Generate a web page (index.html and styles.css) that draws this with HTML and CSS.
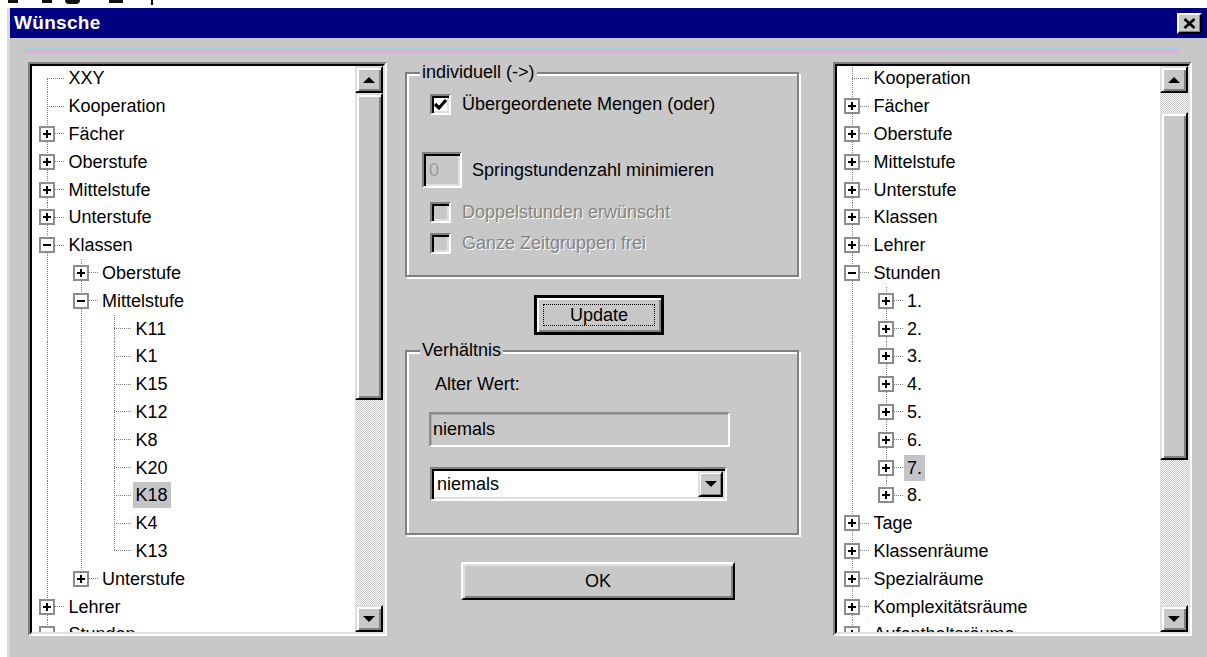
FILE: index.html
```html
<!DOCTYPE html>
<html lang="de">
<head>
<meta charset="utf-8">
<title>Wünsche</title>
<link rel="stylesheet" href="styles.css">
</head>
<body>
<div class="strip">
  <span class="tb tb1"></span><span class="tb tb2"></span><span class="tb tb3"></span><span class="tb tb4"></span><span class="tb tb5"></span>
</div>
<div class="window">
  <div class="titlebar">
    <span class="title">Wünsche</span>
    <button class="close" type="button" aria-label="Schließen">
      <svg width="13" height="11" viewBox="0 0 13 11"><path d="M1.5 1 L11.5 10 M11.5 1 L1.5 10" stroke="#000" stroke-width="2.6" fill="none"/></svg>
    </button>
  </div>
  <div class="client">
    <div class="sep"></div>
    <div class="columns">

      <!-- left tree -->
      <div class="tree">
        <div class="tree-in">
          <div class="list">
            <div class="row"><span class="c first"></span><span class="label">XXY</span></div>
            <div class="row"><span class="c tee"></span><span class="label">Kooperation</span></div>
            <div class="row"><span class="c tee"><span class="box plus"></span></span><span class="label">Fächer</span></div>
            <div class="row"><span class="c tee"><span class="box plus"></span></span><span class="label">Oberstufe</span></div>
            <div class="row"><span class="c tee"><span class="box plus"></span></span><span class="label">Mittelstufe</span></div>
            <div class="row"><span class="c tee"><span class="box plus"></span></span><span class="label">Unterstufe</span></div>
            <div class="row"><span class="c tee"><span class="box minus"></span></span><span class="label">Klassen</span></div>
            <div class="row"><span class="g pipe"></span><span class="c tee"><span class="box plus"></span></span><span class="label">Oberstufe</span></div>
            <div class="row"><span class="g pipe"></span><span class="c tee"><span class="box minus"></span></span><span class="label">Mittelstufe</span></div>
            <div class="row"><span class="g pipe"></span><span class="g pipe"></span><span class="c tee"></span><span class="label">K11</span></div>
            <div class="row"><span class="g pipe"></span><span class="g pipe"></span><span class="c tee"></span><span class="label">K1</span></div>
            <div class="row"><span class="g pipe"></span><span class="g pipe"></span><span class="c tee"></span><span class="label">K15</span></div>
            <div class="row"><span class="g pipe"></span><span class="g pipe"></span><span class="c tee"></span><span class="label">K12</span></div>
            <div class="row"><span class="g pipe"></span><span class="g pipe"></span><span class="c tee"></span><span class="label">K8</span></div>
            <div class="row"><span class="g pipe"></span><span class="g pipe"></span><span class="c tee"></span><span class="label">K20</span></div>
            <div class="row"><span class="g pipe"></span><span class="g pipe"></span><span class="c tee"></span><span class="label sel">K18</span></div>
            <div class="row"><span class="g pipe"></span><span class="g pipe"></span><span class="c tee"></span><span class="label">K4</span></div>
            <div class="row"><span class="g pipe"></span><span class="g pipe"></span><span class="c ell"></span><span class="label">K13</span></div>
            <div class="row"><span class="g pipe"></span><span class="c ell"><span class="box plus"></span></span><span class="label">Unterstufe</span></div>
            <div class="row"><span class="c tee"><span class="box plus"></span></span><span class="label">Lehrer</span></div>
            <div class="row"><span class="c tee"><span class="box minus"></span></span><span class="label">Stunden</span></div>
          </div>
          <div class="scroll">
            <div class="sb-btn"><span class="arr-up"></span></div>
            <div class="thumb thumb-left"></div>
            <div class="track"></div>
            <div class="sb-btn"><span class="arr-down"></span></div>
          </div>
        </div>
      </div>

      <!-- middle column -->
      <div class="center">
        <div class="group group-ind">
          <span class="group-label">individuell (-&gt;)</span>
          <div class="cb-row row1">
            <span class="cb">
              <svg width="17" height="17" viewBox="0 0 17 17"><path d="M3 8 L7 12 L14 4" stroke="#000" stroke-width="3.2" fill="none"/></svg>
            </span>
            <span>Übergeordenete Mengen (oder)</span>
          </div>
          <div class="spin-row">
            <span class="spin">0</span>
            <span>Springstundenzahl minimieren</span>
          </div>
          <div class="cb-row row2">
            <span class="cb off"></span>
            <span class="dis">Doppelstunden erwünscht</span>
          </div>
          <div class="cb-row row3">
            <span class="cb off"></span>
            <span class="dis">Ganze Zeitgruppen frei</span>
          </div>
        </div>

        <button class="btn btn-default" type="button"><span class="focus">Update</span></button>

        <div class="group group-rel">
          <span class="group-label">Verhältnis</span>
          <div class="alt">Alter Wert:</div>
          <div class="field">niemals</div>
          <div class="select">
            <span class="select-text">niemals</span>
            <span class="dd-btn"><span class="arr-down"></span></span>
          </div>
        </div>

        <button class="btn btn-ok" type="button">OK</button>
      </div>

      <!-- right tree -->
      <div class="tree tree-right">
        <div class="tree-in">
          <div class="list">
            <div class="row"><span class="c tee"></span><span class="label">Kooperation</span></div>
            <div class="row"><span class="c tee"><span class="box plus"></span></span><span class="label">Fächer</span></div>
            <div class="row"><span class="c tee"><span class="box plus"></span></span><span class="label">Oberstufe</span></div>
            <div class="row"><span class="c tee"><span class="box plus"></span></span><span class="label">Mittelstufe</span></div>
            <div class="row"><span class="c tee"><span class="box plus"></span></span><span class="label">Unterstufe</span></div>
            <div class="row"><span class="c tee"><span class="box plus"></span></span><span class="label">Klassen</span></div>
            <div class="row"><span class="c tee"><span class="box plus"></span></span><span class="label">Lehrer</span></div>
            <div class="row"><span class="c tee"><span class="box minus"></span></span><span class="label">Stunden</span></div>
            <div class="row"><span class="g pipe"></span><span class="c tee"><span class="box plus"></span></span><span class="label">1.</span></div>
            <div class="row"><span class="g pipe"></span><span class="c tee"><span class="box plus"></span></span><span class="label">2.</span></div>
            <div class="row"><span class="g pipe"></span><span class="c tee"><span class="box plus"></span></span><span class="label">3.</span></div>
            <div class="row"><span class="g pipe"></span><span class="c tee"><span class="box plus"></span></span><span class="label">4.</span></div>
            <div class="row"><span class="g pipe"></span><span class="c tee"><span class="box plus"></span></span><span class="label">5.</span></div>
            <div class="row"><span class="g pipe"></span><span class="c tee"><span class="box plus"></span></span><span class="label">6.</span></div>
            <div class="row"><span class="g pipe"></span><span class="c tee"><span class="box plus"></span></span><span class="label sel">7.</span></div>
            <div class="row"><span class="g pipe"></span><span class="c ell"><span class="box plus"></span></span><span class="label">8.</span></div>
            <div class="row"><span class="c tee"><span class="box plus"></span></span><span class="label">Tage</span></div>
            <div class="row"><span class="c tee"><span class="box plus"></span></span><span class="label">Klassenräume</span></div>
            <div class="row"><span class="c tee"><span class="box plus"></span></span><span class="label">Spezialräume</span></div>
            <div class="row"><span class="c tee"><span class="box plus"></span></span><span class="label">Komplexitätsräume</span></div>
            <div class="row"><span class="c tee"><span class="box plus"></span></span><span class="label">Aufenthaltsräume</span></div>
          </div>
          <div class="scroll">
            <div class="sb-btn"><span class="arr-up"></span></div>
            <div class="track track-top"></div>
            <div class="thumb thumb-right"></div>
            <div class="track"></div>
            <div class="sb-btn"><span class="arr-down"></span></div>
          </div>
        </div>
      </div>

    </div>
  </div>
</div>
</body>
</html>
```

FILE: styles.css
```css
* { box-sizing: border-box; }

html, body { margin: 0; }

body {
  width: 1207px;
  height: 657px;
  overflow: hidden;
  background: #fff;
  font-family: "Liberation Sans", Arial, sans-serif;
  font-size: 18px;
  color: #000;
  --face: #c8c8c8;
  --vdot: repeating-linear-gradient(#808080 0 1px, transparent 1px 2px);
  --hdot: repeating-linear-gradient(90deg, #808080 0 1px, transparent 1px 2px);
}

/* cut-off toolbar glyphs above the dialog */
.strip { height: 8px; display: flex; align-items: flex-start; }
.tb { display: block; height: 3px; background: #111; }
.tb1 { width: 10px; margin-left: 8px; }
.tb2 { width: 10px; margin-left: 24px; }
.tb3 { width: 15px; margin-left: 13px; height: 4px; border-radius: 0 0 7px 7px; }
.tb4 { width: 14px; margin-left: 29px; }
.tb5 { width: 2px; margin-left: 28px; height: 5px; }

/* dialog frame */
.window {
  margin-left: 7px;
  width: 1200px;
  height: 649px;
  background: var(--face);
  border-left: 3px solid #dadada;
}

.titlebar {
  height: 30px;
  background: #000080;
  display: flex;
  align-items: center;
  justify-content: space-between;
  padding-left: 4px;
}

.title {
  color: #fff;
  font-weight: bold;
  font-size: 19px;
  letter-spacing: 0.3px;
}

.close {
  width: 25px;
  height: 21px;
  margin-right: 5px;
  padding: 0;
  background: var(--face);
  border: 2px solid;
  border-color: #fff #000 #000 #fff;
  box-shadow: inset -1px -1px #808080;
  display: flex;
  align-items: center;
  justify-content: center;
}

.client { padding: 9px 0 0 18px; }

.sep {
  margin-left: -3px;
  width: 1155px;
  height: 6px;
  border-top: 3px solid #a4d4d4;
  border-bottom: 3px solid #d8b4d8;
}

.columns {
  margin-top: 9px;
  display: flex;
  align-items: flex-start;
}

/* tree views */
.tree {
  width: 359px;
  height: 574px;
  flex: none;
  border: 2px solid;
  border-color: #808080 #fff #fff #808080;
}

.tree-right { margin-left: 34px; }

.tree-in {
  height: 100%;
  display: flex;
  background: #fff;
  border: 2px solid;
  border-color: #000 #dfdfdf #dfdfdf #000;
}

.list { flex: 1; overflow: hidden; }

.row {
  height: 27.8px;
  display: flex;
  align-items: center;
  white-space: nowrap;
}
.row:first-child { margin-top: -1.5px; }

.g, .c { width: 33.5px; height: 100%; flex: none; }

.g.pipe { background: var(--vdot) 15px 0 / 1px 100% no-repeat; }

.c { display: flex; align-items: center; }

.c.tee {
  background: var(--vdot) 15px 0 / 1px 100% no-repeat,
              var(--hdot) 15px 50% / 18px 1px no-repeat;
}
.c.ell {
  background: var(--vdot) 15px 0 / 1px 50% no-repeat,
              var(--hdot) 15px 50% / 18px 1px no-repeat;
}
.c.first {
  background: var(--vdot) 15px 100% / 1px 50% no-repeat,
              var(--hdot) 15px 50% / 18px 1px no-repeat;
}

.box {
  width: 16px;
  height: 16px;
  margin-left: 7px;
  border: 2px solid #8c8c8c;
  background: #fff;
}
.box.plus {
  background: linear-gradient(#000, #000) center / 8px 2px no-repeat,
              linear-gradient(#000, #000) center / 2px 8px no-repeat,
              #fff;
}
.box.minus {
  background: linear-gradient(#000, #000) center / 8px 2px no-repeat, #fff;
}

.label { padding: 0 3px; line-height: 26px; }
.label.sel { background: #c4c4c8; }

/* scroll bars */
.scroll {
  width: 28px;
  flex: none;
  display: flex;
  flex-direction: column;
}

.sb-btn, .thumb {
  background: var(--face);
  border: 2px solid;
  border-color: #dfdfdf #000 #000 #dfdfdf;
  box-shadow: inset 2px 2px #fff, inset -2px -2px #808080;
}

.sb-btn {
  height: 27px;
  flex: none;
  display: flex;
  align-items: center;
  justify-content: center;
}

.arr-up, .arr-down {
  width: 0;
  height: 0;
  border-left: 6px solid transparent;
  border-right: 6px solid transparent;
}
.arr-up { border-bottom: 6px solid #000; }
.arr-down { border-top: 6px solid #000; }

.thumb { flex: none; }
.thumb-left { height: 307px; }
.thumb-right { height: 348px; }

.track {
  flex: 1;
  background-color: #fff;
  background-image: repeating-conic-gradient(#c8c8c8 0 25%, #fff 0 50%);
  background-size: 2px 2px;
}
.track-top { flex: none; height: 19px; }

/* middle column */
.center {
  width: 394px;
  flex: none;
  margin-left: 18px;
  padding-top: 10px;
  display: flex;
  flex-direction: column;
  align-items: flex-start;
}

.group {
  width: 394px;
  border: 2px solid #808080;
  box-shadow: inset 2px 2px 0 #fff, 2px 2px 0 #fff;
}
.group-ind { height: 205px; }
.group-rel { height: 185px; margin-top: 15px; }

.group-label {
  display: block;
  width: max-content;
  margin: -12px 0 -9px 13px;
  padding: 0 2px;
  line-height: 21px;
  background: var(--face);
}

.cb-row {
  display: flex;
  align-items: center;
  height: 24px;
  margin-left: 23px;
  gap: 11px;
}
.row1 { margin-top: 18px; }
.row2 { margin-top: 12px; }
.row3 { margin-top: 7px; }

.cb {
  width: 21px;
  height: 21px;
  flex: none;
  display: flex;
  align-items: center;
  justify-content: center;
  background: #fff;
  border: 2px solid;
  border-color: #808080 #fff #fff #808080;
  box-shadow: inset 2px 2px #000, inset -2px -2px #dfdfdf;
}
.cb.off { background: var(--face); }

.dis { color: #848484; text-shadow: 1px 1px 0 #fff; }

.spin-row {
  display: flex;
  align-items: center;
  gap: 10px;
  margin: 36px 0 0 15px;
  height: 36px;
}

.spin {
  width: 40px;
  height: 36px;
  padding-left: 5px;
  line-height: 32px;
  color: #9a9a9a;
  background: var(--face);
  border: 2px solid;
  border-color: #808080 #fff #fff #808080;
  box-shadow: inset 2px 2px #000, inset -2px -2px #dfdfdf;
}

.btn {
  font: inherit;
  color: #000;
  padding: 0;
  background: var(--face);
  display: flex;
  align-items: center;
  justify-content: center;
}

.btn-default {
  width: 130px;
  height: 40px;
  margin: 18px 0 0 129px;
  border: 3px solid #000;
  box-shadow: inset 2px 2px #fff, inset -2px -2px #808080;
}

.focus {
  width: calc(100% - 12px);
  height: calc(100% - 12px);
  border: 1px dotted #000;
  display: flex;
  align-items: center;
  justify-content: center;
}

.btn-ok {
  width: 274px;
  height: 38px;
  margin: 27px 0 0 56px;
  border: 2px solid;
  border-color: #fff #000 #000 #fff;
  box-shadow: inset 2px 2px #dfdfdf, inset -2px -2px #808080;
}

.alt { margin: 22px 0 0 28px; line-height: 21px; }

.field {
  width: 301px;
  height: 35px;
  margin: 17px 0 0 22px;
  padding-left: 2px;
  line-height: 31px;
  background: var(--face);
  border: 2px solid;
  border-color: #8c8c8c #fff #fff #8c8c8c;
  box-shadow: inset 1px 1px #a8a8a8;
}

.select {
  width: 297px;
  height: 34px;
  margin: 20px 0 0 23px;
  display: flex;
  align-items: stretch;
  background: #fff;
  border: 2px solid;
  border-color: #808080 #fff #fff #808080;
  box-shadow: inset 2px 2px #000, inset -2px -2px #dfdfdf;
}

.select-text { flex: 1; padding-left: 5px; line-height: 30px; }

.dd-btn {
  width: 25px;
  margin: 2px 2px 2px 0;
  display: flex;
  align-items: center;
  justify-content: center;
  background: var(--face);
  border: 2px solid;
  border-color: #dfdfdf #000 #000 #dfdfdf;
  box-shadow: inset 1px 1px #fff, inset -1px -1px #808080;
}
```
